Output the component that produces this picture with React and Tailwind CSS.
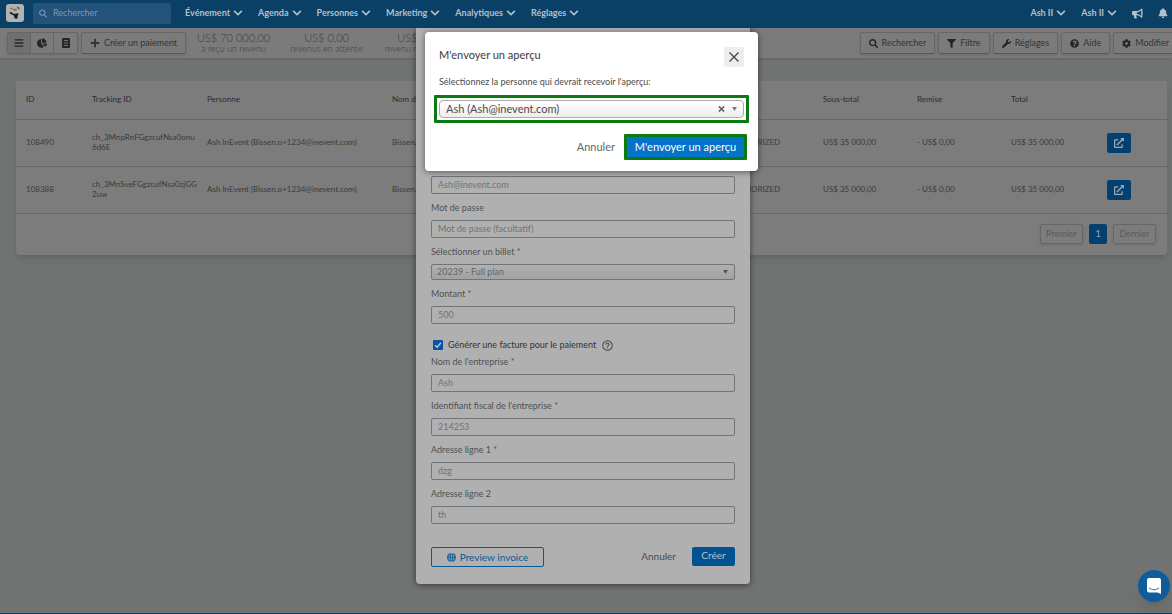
import React from "react";
import {
  FaBars,
  FaBell,
  FaBullhorn,
  FaChartPie,
  FaChevronDown,
  FaCog,
  FaExternalLinkAlt,
  FaFilter,
  FaPlus,
  FaQuestionCircle,
  FaSearch,
  FaWrench,
} from "react-icons/fa";

const menu = ["Événement", "Agenda", "Personnes", "Marketing", "Analytiques", "Réglages"];

const stats = [
  { value: "US$ 70 000,00", label: "a reçu un revenu" },
  { value: "US$ 0,00", label: "revenus en attente" },
  { value: "US$ 0,00", label: "revenu remboursé" },
];

const actions = [
  { label: "Rechercher", icon: FaSearch },
  { label: "Filtre", icon: FaFilter },
  { label: "Réglages", icon: FaWrench },
  { label: "Aide", icon: FaQuestionCircle },
  { label: "Modifier", icon: FaCog },
];

const payments = [
  { id: "108490", tracking: "ch_3MnpRnFGgzcufNsa0onu6d6E" },
  { id: "108388", tracking: "ch_3MnSveFGgzcufNsa0zjGG2uw" },
];

const Logo = () => (
  <svg viewBox="0 0 18 18" className="w-[18px] h-[18px]" aria-hidden="true">
    <rect width="18" height="18" rx="3" fill="#b0b3b2" />
    <path d="M4 4.6 5.8 3.4 7 4 6 5.2 4.6 5.6Z" fill="#7d7444" />
    <path d="M10.8 2.8 12.8 3 13.8 4.8 12.6 5.6 11.8 4.4Z" fill="#4a5c48" />
    <path d="M6.6 5.2 9 4.4 11.4 5.4 10.4 6.8 8 7Z" fill="#8d7059" />
    <path d="M3.4 8 6.4 8.6 7.4 10 12 9.2 12.6 10.4 11.8 11.2 11.4 14.8 8.6 14.6 7.8 11.6 4.2 9.8Z" fill="#14212b" />
  </svg>
);

const SheetIcon = () => (
  <svg viewBox="0 0 8 10" className="w-2 h-[10px]" aria-hidden="true">
    <rect width="8" height="10" rx="1" fill="#252525" />
    <path d="M1.8 2.5h4.4M1.8 5h4.4M1.8 7.5h4.4" stroke="#7c7c7c" strokeWidth="0.9" />
  </svg>
);

const GlobeIcon = () => (
  <svg viewBox="0 0 10 10" className="w-[9px] h-[9px]" aria-hidden="true">
    <circle cx="5" cy="5" r="5" fill="#0a5990" />
    <g fill="none" stroke="#b0b0b0" strokeWidth="0.6">
      <path d="M5 0v10M0.4 3.3h9.2M0.4 6.7h9.2" />
      <ellipse cx="5" cy="5" rx="2.6" ry="5" />
    </g>
  </svg>
);

const HelpIcon = () => (
  <svg viewBox="0 0 12 12" className="w-[11px] h-[11px]" fill="none" stroke="#4a4a4a" aria-hidden="true">
    <circle cx="6" cy="6" r="5.2" strokeWidth="1.1" />
    <path d="M4.4 4.8C4.4 2.7 7.7 2.8 7.6 4.8C7.6 5.9 6 5.9 6 7.1" strokeWidth="1.3" />
    <path d="M6 8v1.2" strokeWidth="1.4" />
  </svg>
);

const Caret = ({ className }) => (
  <svg viewBox="0 0 6 5" className={`w-[5px] h-1 ${className}`} aria-hidden="true">
    <path d="M0 0h6L3 5Z" fill="currentColor" />
  </svg>
);

const Field = ({ id, label, children }) => (
  <div className="pt-2">
    <label htmlFor={id} className="block text-[9px] leading-3 mb-1.5 text-[#4f5152]">
      {label}
    </label>
    {children}
  </div>
);

const TextInput = (props) => (
  <input
    type="text"
    className="block w-full h-[18px] px-1.5 pb-0.5 text-[9px] border border-[#70757b] rounded-xs text-[#727272] placeholder:text-[#727272] outline-none"
    {...props}
  />
);

const toolButton =
  "flex items-center gap-1 h-[22px] px-2 text-[9px] text-[#343434] border border-[#666] border-b-[#595959] rounded-xs shadow-sm";

const Header = () => (
  <header className="relative z-20 flex items-center h-7 pl-1.5 pr-1 pb-0.5 bg-[#0a3f66] text-[#b4c0c9] font-bold text-[9px]">
    <a href="#" aria-label="InEvent">
      <Logo />
    </a>
    <label className="flex items-center gap-1.5 ml-[9px] w-[138px] h-[21px] px-1.5 rounded-xs bg-[#23527a] shrink-0">
      <FaSearch size={9} className="text-[#7190aa]" />
      <input
        type="text"
        aria-label="Rechercher"
        placeholder="Rechercher"
        className="w-full font-normal outline-none placeholder:text-[#8298aa]"
      />
    </label>
    <nav className="flex gap-[15px] ml-3.5">
      {menu.map((item) => (
        <a key={item} href="#" className="flex items-center gap-[3px]">
          {item}
          <FaChevronDown size={10} />
        </a>
      ))}
    </nav>
    <div className="flex items-center gap-[15px] ml-auto">
      <a href="#" className="flex items-center gap-[3px]">
        Ash II
        <FaChevronDown size={10} />
      </a>
      <a href="#" className="flex items-center gap-[3px]">
        Ash II
        <FaChevronDown size={10} />
      </a>
      <button aria-label="Annonces">
        <FaBullhorn size={11} />
      </button>
      <button aria-label="Notifications">
        <FaBell size={10} />
      </button>
    </div>
  </header>
);

const Toolbar = () => (
  <div className="flex items-center h-[30px] pl-[7px] bg-[#7b7b7b] shadow">
    <div className="flex h-[22px] rounded-xs border border-[#666] shadow-sm divide-x divide-[#666]">
      <button aria-label="Liste" className="w-[23px] grid place-items-center bg-[#707070] text-[#252525]">
        <FaBars size={10} />
      </button>
      <button aria-label="Graphique" className="w-[23px] grid place-items-center text-[#252525]">
        <FaChartPie size={10} />
      </button>
      <button aria-label="Rapport" className="w-[23px] grid place-items-center">
        <SheetIcon />
      </button>
    </div>
    <button className={`${toolButton} ml-[3px]`}>
      <FaPlus size={10} />
      Créer un paiement
    </button>
    <div className="flex ml-px">
      {stats.map((s) => (
        <div key={s.label} className="w-[93px] text-center text-[#3e3e3e] font-light whitespace-nowrap">
          <p className="text-[11px] leading-3">{s.value}</p>
          <p className="text-[9px] leading-[10px]">{s.label}</p>
        </div>
      ))}
    </div>
    <div className="flex gap-[3px] ml-auto -mr-1.5">
      {actions.map(({ label, icon: Icon }) => (
        <button key={label} className={toolButton}>
          <Icon size={9} className="text-[#252525]" />
          {label}
        </button>
      ))}
    </div>
  </div>
);

const PaymentsTable = () => (
  <main className="mt-[23px] ml-4 mr-[5px] bg-[#7c7c7c] rounded-b shadow-md">
    <table className="w-full table-fixed text-[8px] leading-[10px] text-left text-[#3b3b3b]">
      <colgroup>
        <col className="w-[66px]" />
        <col className="w-[115px]" />
        <col className="w-[185px]" />
        <col />
        <col className="w-[94px]" />
        <col className="w-[94px]" />
        <col className="w-[94px]" />
        <col className="w-24" />
        <col className="w-[70px]" />
      </colgroup>
      <thead>
        <tr className="h-[38px] border-b border-[#686868] text-[#2a2d33]">
          <th className="px-2.5 pb-0.5 font-normal">ID</th>
          <th className="px-2.5 pb-0.5 font-normal">Tracking ID</th>
          <th className="px-2.5 pb-0.5 font-normal">Personne</th>
          <th className="px-2.5 pb-0.5 font-normal">Nom d'utilisateur</th>
          <th></th>
          <th className="px-2.5 pb-0.5 font-normal">Sous-total</th>
          <th className="px-2.5 pb-0.5 font-normal">Remise</th>
          <th className="px-2.5 pb-0.5 font-normal">Total</th>
          <th></th>
        </tr>
      </thead>
      <tbody>
        {payments.map((p) => (
          <tr key={p.id} className="h-[47px] border-b border-[#686868]">
            <td className="px-2.5 pb-0.5">{p.id}</td>
            <td className="pl-2.5 pb-0.5 break-all">{p.tracking}</td>
            <td className="pl-2.5 pb-0.5 whitespace-nowrap">Ash InEvent (Bissen.o+1234@inevent.com)</td>
            <td className="px-2.5 pb-0.5">Bissen.o+1234</td>
            <td className="px-2.5 pb-0.5">AUTHORIZED</td>
            <td className="px-2.5 pb-0.5">US$ 35 000,00</td>
            <td className="px-2.5 pb-0.5">- US$ 0,00</td>
            <td className="px-2.5 pb-0.5">US$ 35 000,00</td>
            <td className="px-2.5">
              <button
                aria-label="Ouvrir"
                className="grid place-items-center w-6 h-5 rounded-xs bg-[#04406f] text-[#a0a8ae]"
              >
                <FaExternalLinkAlt size={10} />
              </button>
            </td>
          </tr>
        ))}
      </tbody>
    </table>
    <div className="flex justify-end gap-1.5 pt-2.5 pr-[11px] pb-[11px] text-[9px]">
      <button className="w-[43px] h-5 border border-[#666] rounded-xs text-[#5a5a5a] shadow-sm">Premier</button>
      <button className="w-[18px] h-5 rounded-xs bg-[#04406f] text-[#a0a8ae]">1</button>
      <button className="w-[43px] h-5 border border-[#666] rounded-xs text-[#5a5a5a] shadow-sm">Dernier</button>
    </div>
  </main>
);

const PaymentDialog = () => (
  <div className="absolute inset-x-0 top-7 z-10 flex justify-center pr-1.5">
    <form className="w-[334px] px-[15px] pt-[148px] pb-[17px] bg-[#b0b0b0] rounded-b shadow-[0_1px_6px_rgba(0,0,0,0.5)]">
      <TextInput aria-label="Email" defaultValue="Ash@inevent.com" />
      <Field id="password" label="Mot de passe">
        <TextInput id="password" placeholder="Mot de passe (facultatif)" />
      </Field>
      <Field id="ticket" label="Sélectionner un billet *">
        <div className="relative">
          <select
            id="ticket"
            className="block w-full h-4 pl-[5px] text-[9px] leading-3 appearance-none border border-[#70757b] rounded-xs text-[#666] bg-linear-to-b from-[#b0b0b0] to-[#a2a2a2] outline-none"
          >
            <option>20239 - Full plan</option>
          </select>
          <Caret className="absolute right-[7px] top-1.5 text-[#4f5152]" />
        </div>
      </Field>
      <Field id="amount" label="Montant *">
        <TextInput id="amount" defaultValue="500" />
      </Field>
      <div className="flex items-center h-3 mt-[15px] -mb-[3px] pl-0.5 text-[9px] text-[#333]">
        <label className="flex items-center gap-[5px]">
          <span className="relative grid place-items-center">
            <input type="checkbox" defaultChecked className="appearance-none w-[10px] h-[10px] rounded-[1px] bg-[#0552a8]" />
            <svg viewBox="0 0 10 10" className="absolute w-[10px] h-[10px]" fill="none" aria-hidden="true">
              <path d="M2 5.2 4.1 7.3 8 2.8" stroke="#c4c9ce" strokeWidth="1.4" />
            </svg>
          </span>
          Générer une facture pour le paiement
        </label>
        <span className="ml-1.5">
          <HelpIcon />
        </span>
      </div>
      <Field id="company" label="Nom de l'entreprise *">
        <TextInput id="company" defaultValue="Ash" />
      </Field>
      <Field id="tax" label="Identifiant fiscal de l'entreprise *">
        <TextInput id="tax" defaultValue="214253" />
      </Field>
      <Field id="address1" label="Adresse ligne 1 *">
        <TextInput id="address1" defaultValue="dzg" />
      </Field>
      <Field id="address2" label="Adresse ligne 2">
        <TextInput id="address2" defaultValue="th" />
      </Field>
      <div className="flex items-start mt-[23px] text-[10px]">
        <button
          type="button"
          className="flex items-center justify-center gap-1 w-[113px] h-5 border border-[#0a5990] rounded-xs text-[#0a5990]"
        >
          <GlobeIcon />
          Preview invoice
        </button>
        <button type="button" className="ml-auto mr-4 h-[18px] text-[#4a4a4a]">
          Annuler
        </button>
        <button type="button" className="w-[43px] h-[19px] pb-0.5 rounded-xs bg-[#01538f] text-[#b3c3cf]">
          Créer
        </button>
      </div>
    </form>
  </div>
);

const PreviewDialog = () => (
  <div className="absolute inset-x-0 top-8 z-30 flex justify-center pl-[11px]">
    <form
      role="dialog"
      aria-labelledby="preview-title"
      className="w-[333px] pt-[15px] px-[9px] pb-[11px] bg-white rounded text-[#4a4a4a] shadow-[0_1px_6px_rgba(0,0,0,0.5)]"
    >
      <div className="flex justify-between px-[5px]">
        <h2 id="preview-title" className="text-[11px] leading-4 font-medium">
          M'envoyer un aperçu
        </h2>
        <button type="button" aria-label="Fermer" className="grid place-items-center w-5 h-5 rounded-xs bg-[#ededed]">
          <svg viewBox="0 0 10 10" className="w-[10px] h-[10px]" stroke="#444" strokeWidth="1.3" aria-hidden="true">
            <path d="M0.5 0.5 9.5 9.5M9.5 0.5 0.5 9.5" />
          </svg>
        </button>
      </div>
      <label htmlFor="person" className="block mt-[9px] mb-[7px] px-[5px] text-[9px] leading-3">
        Sélectionnez la personne qui devrait recevoir l'aperçu:
      </label>
      <div className="relative p-0.5 border-3 border-[#0b7a0f] rounded-[1px]">
        <select
          id="person"
          className="block w-full h-[18px] pl-1.5 pb-0.5 text-[11px] leading-4 appearance-none border border-[#aaa] rounded-sm bg-linear-to-b from-white to-[#eee] outline-none"
        >
          <option>Ash (Ash@inevent.com)</option>
        </select>
        <button type="button" aria-label="Effacer" className="absolute right-[21px] top-[7px]">
          <svg viewBox="0 0 8 8" className="w-[7px] h-2" stroke="#666" strokeWidth="1.8" aria-hidden="true">
            <path d="M1 1 7 7M7 1 1 7" />
          </svg>
        </button>
        <Caret className="absolute right-[9px] top-[9px] text-[#777]" />
      </div>
      <div className="flex items-center justify-end gap-[9px] mt-[11px] pr-0.5 text-[11px]">
        <button type="button" className="text-[#666]">
          Annuler
        </button>
        <button type="button" className="w-[123px] h-[26px] border-3 border-[#0b7a0f] rounded-[1px] bg-[#0474c8] text-white">
          M'envoyer un aperçu
        </button>
      </div>
    </form>
  </div>
);

const App = () => {
  return (
    <div className="relative min-h-screen overflow-hidden flex flex-col bg-[#707372] border-b border-[#0a3f66] font-[Lato,sans-serif]">
      <Header />
      <Toolbar />
      <PaymentsTable />
      <PaymentDialog />
      <PreviewDialog />

      {/* Chat launcher */}
      <button
        aria-label="Chat"
        className="fixed right-[2px] bottom-3 z-40 grid place-items-center w-8 h-8 rounded-full bg-[#0e5c9c] shadow-lg"
      >
        <svg viewBox="0 0 14 16" className="w-3.5 h-4" aria-hidden="true">
          <path d="M2 0h10a2 2 0 0 1 2 2v14l-3.4-1.6H2a2 2 0 0 1-2-2V2a2 2 0 0 1 2-2Z" fill="#fff" />
          <path d="M2.3 10.2c2.8 2 6.6 2 9.4 0" fill="none" stroke="#0e5c9c" strokeWidth="0.9" strokeLinecap="round" />
        </svg>
      </button>
    </div>
  );
};

export default App;
